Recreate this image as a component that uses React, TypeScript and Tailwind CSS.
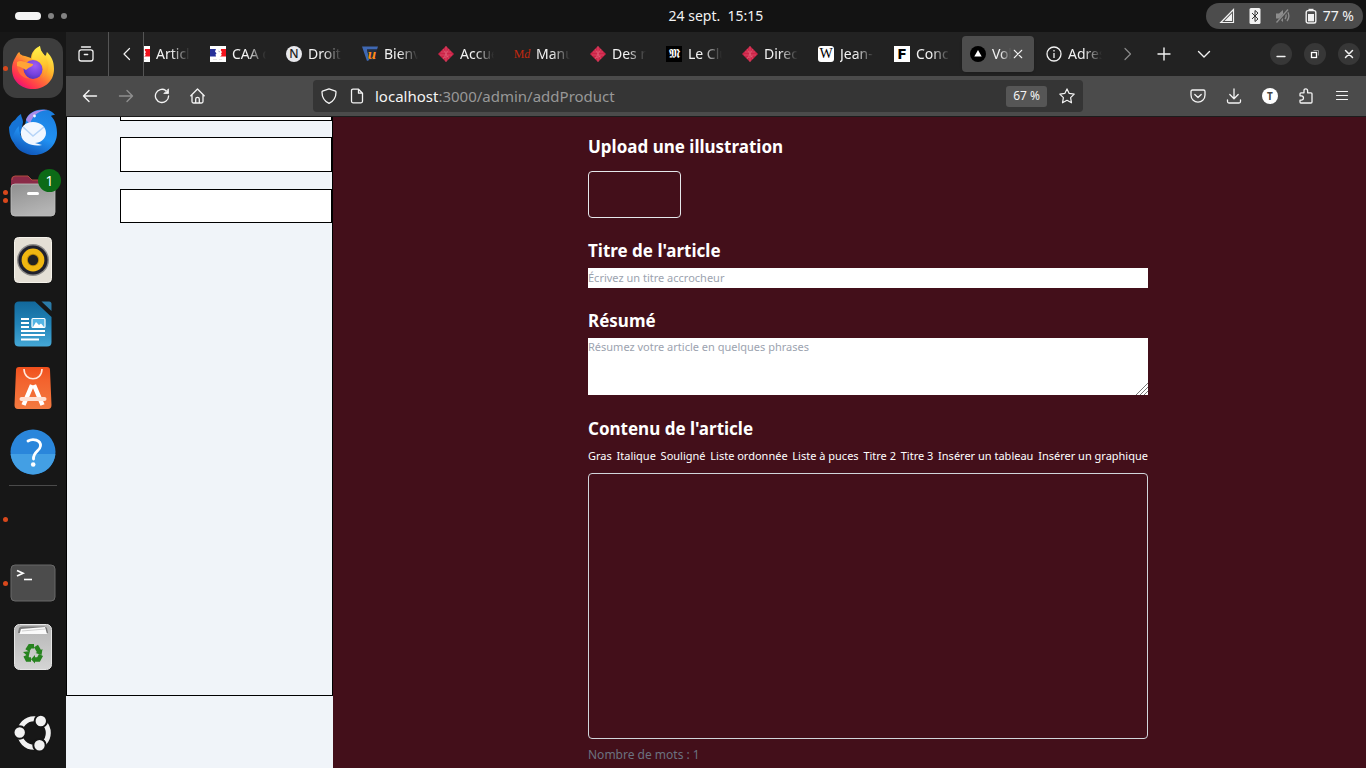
import type { ReactNode } from "react";

const UI_FONT = "font-['Noto_Sans','Open_Sans',sans-serif]";

function Line({ d, size = 16, width = 1.2, className = "" }: { d: string; size?: number; width?: number; className?: string }) {
  return (
    <svg
      width={size}
      height={size}
      viewBox="0 0 16 16"
      fill="none"
      stroke="currentColor"
      strokeWidth={width}
      strokeLinecap="round"
      strokeLinejoin="round"
      className={className}
      aria-hidden="true"
    >
      <path d={d} />
    </svg>
  );
}

/* ---------- Desktop top bar ---------- */

function TopBar() {
  return (
    <header className="grid h-8 shrink-0 grid-cols-3 items-center bg-[#131313] text-[#f2f2f2]">
      <div className="flex items-center gap-[7px] pl-[15px]">
        <span className="h-2 w-[26px] rounded-full bg-[#f4f4f4]" />
        <span className="size-[6px] rounded-full bg-[#828282]" />
        <span className="size-[6px] rounded-full bg-[#828282]" />
      </div>
      <button className="whitespace-pre pl-[66px] text-sm">24 sept.  15:15</button>
      <button className="mr-[3px] flex h-[26px] items-center justify-self-end rounded-full bg-[#4c4c4c] pr-[9px] pl-[13px] text-sm">
        <svg width="16" height="16" viewBox="0 0 16 16" aria-hidden="true">
          <path d="M1.8 14.5 L14.5 1.5 V14.5 Z" fill="none" stroke="#f2f2f2" strokeWidth="1.2" />
          <path d="M5.5 13 L13 5.2 V13 Z" fill="#f2f2f2" />
        </svg>
        <svg width="12" height="16" viewBox="0 0 12 16" className="ml-[14px]" aria-hidden="true">
          <rect x="0.5" y="0" width="11" height="16" rx="1.5" fill="#f2f2f2" />
          <path d="M3 5 L9 11 L6 13.5 V2.5 L9 5 L3 11" fill="none" stroke="#333" strokeWidth="1" />
        </svg>
        <svg width="16" height="16" viewBox="0 0 16 16" className="ml-[14px]" aria-hidden="true">
          <path d="M1 5.5 H4 L8 2 V14 L4 10.5 H1 Z" fill="#8d8d8d" />
          <path d="M10 5 Q12.2 8 10 11 M12 3 Q15.8 8 12 13" fill="none" stroke="#8d8d8d" strokeWidth="1.3" />
          <path d="M2 15 L14 1" stroke="#4c4c4c" strokeWidth="2.6" />
          <path d="M1.5 14.5 L13 1.5" stroke="#8d8d8d" strokeWidth="1.3" />
        </svg>
        <svg width="12" height="16" viewBox="0 0 12 16" className="ml-[14px]" aria-hidden="true">
          <path d="M3.5 2.5 V0.8 H8.5 V2.5" fill="#f2f2f2" />
          <rect x="1.2" y="2.6" width="9.6" height="12.4" rx="1.8" fill="none" stroke="#f2f2f2" strokeWidth="1.4" />
          <rect x="3" y="6" width="6" height="7.4" fill="#f2f2f2" />
        </svg>
        <span className="ml-[6px]">77 %</span>
      </button>
    </header>
  );
}

/* ---------- Dock ---------- */

function FirefoxIcon() {
  return (
    <svg width="48" height="48" viewBox="0 0 48 48" aria-hidden="true">
      <defs>
        <linearGradient id="ffBody" x1="0.85" y1="0.1" x2="0.2" y2="0.95">
          <stop offset="0" stopColor="#fff14a" />
          <stop offset="0.35" stopColor="#ffb52b" />
          <stop offset="0.6" stopColor="#ff6a3a" />
          <stop offset="0.85" stopColor="#ff3050" />
          <stop offset="1" stopColor="#e8117a" />
        </linearGradient>
        <radialGradient id="ffGlobe" cx="0.6" cy="0.3" r="0.8">
          <stop offset="0" stopColor="#a05cf5" />
          <stop offset="0.6" stopColor="#7341dc" />
          <stop offset="1" stopColor="#4a2fb0" />
        </radialGradient>
        <linearGradient id="ffTail" x1="0.5" y1="0" x2="0.6" y2="1">
          <stop offset="0" stopColor="#fff24a" />
          <stop offset="0.6" stopColor="#ffc52e" />
          <stop offset="1" stopColor="#ff8a30" />
        </linearGradient>
      </defs>
      <path d="M3 25 C3 18 6 14 9 9 C10 8 11 8 11 10 C13 11 14 12 16 12 L22 14 C22 9 26 4 31 2 C31 6 33 9 36 12 C38 11 37 9 38 8 C43 13 45 18 45 25 C45 37 36 45 24 45 C12 45 3 37 3 25 Z" fill="url(#ffBody)" />
      <path d="M31 2 C31 8 36 10 38 16 C41 22 39 30 33 34 C39 27 34 17 23 15 C23 9 26 5 31 2 Z" fill="url(#ffTail)" />
      <circle cx="24" cy="25.5" r="9.5" fill="url(#ffGlobe)" />
      <path d="M8 18 C11 15 14 16 16 18 C12 22 14 31 21 34.5 C13 35 7 28 8 18 Z" fill="#ff6a3c" />
      <path d="M8 18 C13 15 17 19 24 20 C25 22 20 23 17 26 C14 24 12 23 8 22 Z" fill="#ffa436" />
    </svg>
  );
}

function ThunderbirdIcon() {
  return (
    <svg width="50" height="50" viewBox="0 0 50 50" aria-hidden="true">
      <defs>
        <linearGradient id="tbBody" x1="0.7" y1="0" x2="0.3" y2="1">
          <stop offset="0" stopColor="#1b7fe0" />
          <stop offset="0.55" stopColor="#2191f2" />
          <stop offset="1" stopColor="#0f55b8" />
        </linearGradient>
      </defs>
      <path d="M1 20 C3 18 3 15 7 13 C9 10 11 8 13 7 C13 10 15 12 15 15 L13 26 L8 38 C3 34 1 27 1 20 Z" fill="#1674d6" />
      <path d="M18 13 C20 6 29 1 38 3 C42 3 45 5 47 8 C45 8 44 8 43 9 C48 14 49 21 49 26 C49 38 39 48 26 48 C15 48 5 40 5 31 C5 27 8 22 11 19 C10 25 13 29 15 31 Z" fill="url(#tbBody)" />
      <path d="M18 13 C20 6 29 2 40 3 C34 3 25 6 22 17 Z" fill="#a98be8" />
      <path d="M13 28 C12 20 17 15 25 15 C33 15 38 20 38 26 C38 32 32 36 27 36 L34 38 C25 40 14 36 13 28 Z" fill="#f1f7ff" />
      <path d="M15 20 L25 29 L36 20" fill="none" stroke="#b6d4f7" strokeWidth="1.6" />
      <circle cx="26.5" cy="9" r="1.4" fill="#e9f5ff" />
    </svg>
  );
}

function FilesIcon() {
  return (
    <svg width="46" height="44" viewBox="0 0 46 44" aria-hidden="true">
      <defs>
        <linearGradient id="flFront" x1="0" y1="0" x2="0.4" y2="1">
          <stop offset="0" stopColor="#8f8f8f" />
          <stop offset="1" stopColor="#b4b4b4" />
        </linearGradient>
      </defs>
      <path d="M1 14 V6 Q1 2 5 2 H18 L22 6 H41 Q45 6 45 10 V14 Z" fill="#8a2a47" />
      <path d="M2 6 Q2 2 5 2 H18 L22 6 H41" fill="none" stroke="#b04c3f" />
      <rect x="1" y="10" width="44" height="32" rx="4" fill="url(#flFront)" stroke="#c0c0c0" strokeWidth="0.8" />
      <rect x="17" y="18" width="12" height="3" rx="1.5" fill="#fff" />
    </svg>
  );
}

function SpeakerIcon() {
  return (
    <svg width="38" height="46" viewBox="0 0 38 46" aria-hidden="true">
      <rect x="0.5" y="0.5" width="37" height="45" rx="4" fill="#e4dfd5" stroke="#f5f2ea" />
      <circle cx="19" cy="23" r="16" fill="#8c8a88" />
      <circle cx="19" cy="23" r="14.6" fill="#20202c" />
      <circle cx="19" cy="23" r="11.4" fill="#f0b711" />
      <circle cx="19" cy="23" r="6.2" fill="#c58f05" />
      <circle cx="19" cy="23" r="5.2" fill="#222" />
    </svg>
  );
}

function WriterIcon() {
  return (
    <svg width="38" height="46" viewBox="0 0 38 46" aria-hidden="true">
      <defs>
        <linearGradient id="wrBg" x1="0" y1="0" x2="0" y2="1">
          <stop offset="0" stopColor="#12689b" />
          <stop offset="0.5" stopColor="#2284b8" />
          <stop offset="1" stopColor="#45a8d6" />
        </linearGradient>
      </defs>
      <path d="M5 0.5 H21 L37.5 16 V41 Q37.5 45.5 33 45.5 H5 Q0.5 45.5 0.5 41 V5 Q0.5 0.5 5 0.5 Z" fill="url(#wrBg)" />
      <path d="M27.5 0.5 H35 Q37.5 0.5 37.5 3 V10 Z" fill="#2b7ba8" />
      <path d="M7 18 H15 M7 22 H15 M7 26 H15 M7 30 H31 M7 34 H31 M7 38.5 H25" stroke="#fff" strokeWidth="2" />
      <rect x="18" y="17.5" width="13" height="9" rx="1" fill="#53b4e4" stroke="#fff" strokeWidth="1.2" />
      <path d="M19 26 L22 21 L25 24 L27 22.5 L30 26 Z" fill="#fff" />
    </svg>
  );
}

function StoreIcon() {
  return (
    <svg width="38" height="44" viewBox="0 0 38 44" aria-hidden="true">
      <defs>
        <linearGradient id="stBg" x1="0" y1="0" x2="0" y2="1">
          <stop offset="0" stopColor="#f04f1c" />
          <stop offset="0.3" stopColor="#f3622d" />
          <stop offset="1" stopColor="#f37a40" />
        </linearGradient>
      </defs>
      <path d="M5 1 H33 Q36 1 36 4 L37.5 39 Q37.5 43 34 43 H4 Q0.5 43 0.5 39 L2 4 Q2 1 5 1 Z" fill="url(#stBg)" />
      <path d="M10 3 C10 16 28 16 28 3" fill="none" stroke="#ffe9dd" strokeWidth="1.6" />
      <path d="M18 19 L9.5 39 M20 19 L28.5 39" stroke="#fff" strokeWidth="4.4" />
      <path d="M7.5 33 H30.5" stroke="#ffe1d3" strokeWidth="4" strokeLinecap="round" />
    </svg>
  );
}

function HelpIcon() {
  return (
    <svg width="46" height="46" viewBox="0 0 46 46" aria-hidden="true">
      <circle cx="23" cy="23" r="22.5" fill="#2a86db" />
      <path d="M0.6 25 A22.5 22.5 0 0 0 45.4 25 Z" fill="#439fe4" />
      <path d="M18 12 C23 9 31 11 30.5 17 C30 22 23 23 23.5 30" fill="none" stroke="#fff" strokeWidth="2.8" strokeLinecap="round" />
      <circle cx="23.2" cy="35.5" r="2.3" fill="#fff" />
    </svg>
  );
}

function TerminalIcon() {
  return (
    <svg width="46" height="38" viewBox="0 0 46 38" aria-hidden="true">
      <rect x="1" y="1" width="44" height="36" rx="4" fill="#4c4c4c" stroke="#686868" />
      <path d="M7 6.5 L13 9.3 L7 12" fill="none" stroke="#fff" strokeWidth="1.7" />
      <path d="M14 15.5 H22" stroke="#fff" strokeWidth="1.6" />
    </svg>
  );
}

function TrashIcon() {
  return (
    <svg width="38" height="46" viewBox="0 0 38 46" aria-hidden="true">
      <defs>
        <linearGradient id="trBg" x1="0" y1="0" x2="0" y2="1">
          <stop offset="0" stopColor="#b5b5b5" />
          <stop offset="1" stopColor="#d4d4d4" />
        </linearGradient>
      </defs>
      <rect x="0.5" y="0.5" width="37" height="45" rx="5" fill="url(#trBg)" stroke="#e5e5e5" />
      <path d="M4 9 L5 4 Q6 2.5 8 2.5 H30 Q32 2.5 33 4 L34 9 Z" fill="#777" />
      <path d="M5.5 10 L7 5 L31 3 L33 10 Z" fill="#fafafa" />
      <path d="M8 7 L31 5" stroke="#bbb" strokeWidth="0.7" />
      <g fill="none" stroke="#27831f" strokeWidth="4.6">
        <path d="M13.3 26.5 L16 22.3 H20" />
        <path d="M22 22 L25.5 28" />
        <path d="M27 31 L24.5 35.5 H20" />
        <path d="M17 35.5 H13.5 L11.5 31.5" />
      </g>
      <path d="M21.5 29 L28.5 25 L27.5 31 Z M21 31 V39.5 L17 35.3 Z M9 28 L16 27 L14.5 33 Z" fill="#27831f" />
    </svg>
  );
}

function UbuntuIcon() {
  return (
    <svg width="40" height="40" viewBox="0 0 40 40" aria-hidden="true">
      <circle cx="21" cy="20" r="14.3" fill="none" stroke="#f2f2f2" strokeWidth="5" />
      <g fill="#f2f2f2" stroke="#161616" strokeWidth="2">
        <circle cx="6.7" cy="19.5" r="6.2" />
        <circle cx="27.8" cy="8" r="6.2" />
        <circle cx="26.5" cy="32.2" r="6.2" />
      </g>
    </svg>
  );
}

function DockItem({ label, dots = 0, children }: { label: string; dots?: number; children?: ReactNode }) {
  return (
    <button aria-label={label} className="relative flex h-16 w-full shrink-0 items-center justify-center">
      {dots > 0 && (
        <span className="absolute left-[3px] flex flex-col gap-[3px]">
          {Array.from({ length: dots }, (_, i) => (
            <span key={i} className="size-[5px] rounded-full bg-[#d9481c]" />
          ))}
        </span>
      )}
      {children}
    </button>
  );
}

function Dock() {
  return (
    <nav aria-label="Dock" className="flex w-[66px] shrink-0 flex-col bg-[#171717] pt-1 pb-[3px]">
      <DockItem label="Firefox" dots={1}>
        <span className="flex size-[60px] items-center justify-center rounded-[14px] bg-[#3d3d3d]">
          <FirefoxIcon />
        </span>
      </DockItem>
      <DockItem label="Thunderbird"><ThunderbirdIcon /></DockItem>
      <DockItem label="Fichiers" dots={2}>
        <FilesIcon />
        <span className="absolute top-[5px] right-[5px] flex size-[23px] items-center justify-center rounded-full bg-[#0c6b17] text-sm text-white">
          1
        </span>
      </DockItem>
      <DockItem label="Rhythmbox"><SpeakerIcon /></DockItem>
      <DockItem label="LibreOffice Writer"><WriterIcon /></DockItem>
      <DockItem label="Logiciels"><StoreIcon /></DockItem>
      <DockItem label="Aide"><HelpIcon /></DockItem>
      <div className="mx-[9px] my-px h-px shrink-0 bg-[#4a4a4a]" />
      <DockItem label="Application" dots={1} />
      <DockItem label="Terminal" dots={1}><TerminalIcon /></DockItem>
      <DockItem label="Corbeille"><TrashIcon /></DockItem>
      <div className="mt-auto">
        <DockItem label="Applications"><UbuntuIcon /></DockItem>
      </div>
    </nav>
  );
}

/* ---------- Browser ---------- */

function FlagIcon() {
  return (
    <svg width="16" height="16" viewBox="0 0 16 16" aria-hidden="true">
      <rect width="16" height="16" fill="#fff" />
      <path d="M0 3 H6 L5 5.5 L6.5 7.5 L5.5 8.5 L6 10.5 H0 Z" fill="#26309a" />
      <path d="M11 3 H16 V10.5 H10 C12 9.5 12 8.5 11 7.5 L12 6 L10.8 4.5 Z" fill="#f2121c" />
      <path d="M8.5 4.5 L9.8 5.5 L9 6.5 Z" fill="#77779a" />
      <path d="M3 13.5 H7 M9 13.5 H12" stroke="#d0d0d0" strokeWidth="0.6" />
    </svg>
  );
}

function NIcon() {
  return (
    <span className="flex size-4 items-center justify-center rounded-full bg-[#e9e9ed] text-xs leading-none font-medium text-[#222]">N</span>
  );
}

function UIcon() {
  return (
    <span className="relative flex size-4 items-center justify-end pr-[2px]">
      <svg width="16" height="16" viewBox="0 0 16 16" className="absolute inset-0" aria-hidden="true">
        <path d="M0 0.5 H16 L15 3.5 H5 L7.5 14 L5 15 Z" fill="#3f68b3" />
        <path d="M5 3.5 H15 L12.5 14 H7.5 Z" fill="#222c40" />
      </svg>
      <span className="relative font-['Liberation_Serif',serif] text-[15px] leading-none font-bold text-[#ff8a14] italic">u</span>
    </span>
  );
}

function DiamondIcon() {
  return (
    <svg width="16" height="16" viewBox="0 0 16 16" aria-hidden="true">
      <path d="M8 0 L16 8 L8 16 L0 8 Z" fill="#cc2347" />
      <path d="M5 3 L8 8 L5 13 M8 0 V16 M11 3 L8 8 L11 13 M3 6 H13 M2 9 L14 9 M5 12 L11 10" fill="none" stroke="#e8768c" strokeWidth="0.4" />
    </svg>
  );
}

function MdIcon() {
  return (
    <span className="flex size-4 items-center justify-center font-['Liberation_Serif',serif] text-xs leading-none text-[#c0280f]">
      M<i>d</i>
    </span>
  );
}

function MondeIcon() {
  return (
    <span className="flex size-4 items-center justify-center bg-black font-['DejaVu_Sans',sans-serif] text-xs leading-none text-white">𝕸</span>
  );
}

function WikiIcon() {
  return (
    <span className="flex size-4 items-center justify-center rounded-[3px] bg-white font-['Liberation_Serif',serif] text-sm leading-none text-black">W</span>
  );
}

function FIcon() {
  return (
    <span className="flex size-4 items-center justify-center bg-white font-['DejaVu_Sans',sans-serif] text-sm leading-none font-bold text-black">F</span>
  );
}

function TriangleIcon() {
  return (
    <svg width="16" height="16" viewBox="0 0 16 16" aria-hidden="true">
      <circle cx="8" cy="8" r="8" fill="#000" />
      <path d="M8 4 L11.7 10.5 H4.3 Z" fill="#fff" />
    </svg>
  );
}

function InfoIcon() {
  return (
    <svg width="16" height="16" viewBox="0 0 16 16" fill="none" stroke="#f2f2f2" strokeWidth="1.3" aria-hidden="true">
      <circle cx="8" cy="8" r="7" />
      <path d="M8 7 V12 M8 4 V5.5" />
    </svg>
  );
}

const TABS: { title: string; icon: ReactNode; active?: boolean }[] = [
  { title: "Article", icon: <FlagIcon /> },
  { title: "CAA de", icon: <FlagIcon /> },
  { title: "Droit", icon: <NIcon /> },
  { title: "Bienv", icon: <UIcon /> },
  { title: "Accue", icon: <DiamondIcon /> },
  { title: "Manue", icon: <MdIcon /> },
  { title: "Des n", icon: <DiamondIcon /> },
  { title: "Le Clu", icon: <MondeIcon /> },
  { title: "Direct", icon: <DiamondIcon /> },
  { title: "Jean-", icon: <WikiIcon /> },
  { title: "Conce", icon: <FIcon /> },
  { title: "Vol", icon: <TriangleIcon />, active: true },
  { title: "Adres", icon: <InfoIcon /> },
];

function Tab({ title, icon, active }: { title: string; icon: ReactNode; active?: boolean }) {
  return (
    <div className="w-[76px] shrink-0 px-0.5 py-1">
      <div className={`flex h-9 items-center rounded pl-2 ${active ? "bg-[#4d4d4d] pr-[11px] shadow" : "pr-2"}`}>
        <span className="shrink-0">{icon}</span>
        <button
          role="tab"
          aria-selected={!!active}
          className="ml-[6px] min-w-0 flex-1 overflow-hidden [mask-image:linear-gradient(to_right,black_45%,transparent)] text-left text-sm whitespace-nowrap"
        >
          {title}
        </button>
        {active && (
          <button aria-label="Fermer l'onglet" className="ml-[2px] shrink-0">
            <Line d="M2 2 L14 14 M14 2 L2 14" size={10} width={1.7} />
          </button>
        )}
      </div>
    </div>
  );
}

function TabBar() {
  return (
    <div className="flex h-11 shrink-0 items-center bg-[#222222] text-[#f2f2f2]">
      <button aria-label="Vue des onglets" className="flex h-full w-[43px] items-center justify-center border-r border-[#555] pr-[2px]">
        <Line size={16} width={1.3} d="M3.5 1 H12.5 M1 6 Q1 3.8 3.2 3.8 H12.8 Q15 3.8 15 6 V12.8 Q15 15 12.8 15 H3.2 Q1 15 1 12.8 Z M6.3 8.5 H9.7" />
      </button>
      <button aria-label="Onglets précédents" className="flex h-full w-[35px] items-center justify-center border-r border-[#555] pl-[2px]">
        <Line d="M10.5 2.5 L5 8 L10.5 13.5" />
      </button>
      <div role="tablist" className="flex min-w-0 flex-1 justify-end overflow-hidden">
        {TABS.map((tab) => (
          <Tab key={tab.title} {...tab} />
        ))}
      </div>
      <button aria-label="Onglets suivants" className="flex w-8 items-center justify-center text-[#8a8a8a]">
        <Line d="M5 2.5 L10.5 8 L5 13.5" />
      </button>
      <button aria-label="Nouvel onglet" className="flex w-10 items-center justify-center">
        <Line d="M8 2 V14 M2 8 H14" width={1.4} />
      </button>
      <button aria-label="Lister les onglets" className="flex w-10 items-center justify-center">
        <Line d="M2.5 5.5 L8 11 L13.5 5.5" width={1.4} />
      </button>
      <div className="ml-[46px] flex gap-3 pr-[6px]">
        <button aria-label="Réduire" className="flex size-[22px] items-center justify-center rounded-full bg-[#373737]">
          <Line d="M4 10.5 H12" width={1.3} />
        </button>
        <button aria-label="Restaurer" className="flex size-[22px] items-center justify-center rounded-full bg-[#373737]">
          <svg width="16" height="16" viewBox="0 0 16 16" fill="none" aria-hidden="true">
            <rect x="4.5" y="6.5" width="5" height="5" stroke="#fff" strokeWidth="1.3" />
            <path d="M6.5 4.5 H11.5 V9.5" stroke="#8a8a8a" />
          </svg>
        </button>
        <button aria-label="Fermer" className="flex size-[22px] items-center justify-center rounded-full bg-[#373737]">
          <Line d="M4.5 4.5 L11.5 11.5 M11.5 4.5 L4.5 11.5" width={1.5} />
        </button>
      </div>
    </div>
  );
}

function ToolButton({ label, dim, children }: { label: string; dim?: boolean; children: ReactNode }) {
  return (
    <button aria-label={label} className={`flex h-9 w-9 items-center justify-center ${dim ? "text-[#8f8f8f]" : ""}`}>
      {children}
    </button>
  );
}

function NavBar() {
  return (
    <div className="flex h-[41px] shrink-0 items-center border-b border-[#1c1c1c] bg-[#4b4b4b] px-[6px] text-[#f4f4f4]">
      <ToolButton label="Précédent"><Line d="M14.5 8 H1.5 M7 2.5 L1.5 8 L7 13.5" width={1.4} /></ToolButton>
      <ToolButton label="Suivant" dim><Line d="M1.5 8 H14.5 M9 2.5 L14.5 8 L9 13.5" width={1.4} /></ToolButton>
      <ToolButton label="Actualiser">
        <svg width="16" height="16" viewBox="0 0 16 16" fill="none" stroke="currentColor" strokeWidth="1.3" strokeLinecap="round" aria-hidden="true">
          <path d="M11.8 2.5 A6.6 6.6 0 1 0 14.6 8" />
          <path d="M14.5 1.2 V5.5 H10.2 Z" fill="currentColor" strokeWidth="0.8" strokeLinejoin="round" />
        </svg>
      </ToolButton>
      <ToolButton label="Accueil">
        <Line d="M0.8 7.8 L7.5 1 L14.2 7.8 M2 6.8 V13.5 Q2 15 3.5 15 H11.5 Q13 15 13 13.5 V6.8 M5.7 15 V11 Q5.7 9.3 7.5 9.3 Q9.3 9.3 9.3 11 V15" width={1.3} />
      </ToolButton>

      <div className="mx-[97px] flex h-8 min-w-0 flex-1 items-center rounded bg-[#353535] px-2">
        <button aria-label="Protection contre le pistage">
          <Line d="M8 0.8 L14.5 3.2 Q15 3.4 15 4.2 C15 9.5 12.5 13.2 8 15.3 C3.5 13.2 1 9.5 1 4.2 Q1 3.4 1.5 3.2 Z" width={1.3} />
        </button>
        <button aria-label="Informations sur le site" className="ml-3">
          <Line d="M9.5 1.2 H4 Q2.5 1.2 2.5 2.7 V13.3 Q2.5 14.8 4 14.8 H12 Q13.5 14.8 13.5 13.3 V5.2 Z M9.5 1.2 V5.2 H13.5" width={1.3} />
        </button>
        <div role="textbox" aria-label="Adresse" className="ml-[10px] min-w-0 flex-1 truncate text-[15px] leading-5 text-[#989898]">
          <span className="text-[#f4f4f4]">localhost</span>:3000/admin/addProduct
        </div>
        <button className="flex h-[21px] items-center rounded-[3px] bg-[#565656] px-[7px] text-xs">67 %</button>
        <button aria-label="Marquer cette page" className="ml-3">
          <Line d="M8 0.9 L10.2 5.4 L15.2 6.1 L11.6 9.6 L12.5 14.8 L8 12.3 L3.5 14.8 L4.4 9.6 L0.8 6.1 L5.8 5.4 Z" width={1.2} />
        </button>
      </div>

      <ToolButton label="Pocket">
        <Line d="M2.5 2 H13.5 Q15 2 15 3.5 V7 C15 16.5 1 16.5 1 7 V3.5 Q1 2 2.5 2 Z M4.8 6.5 L8 9.5 L11.2 6.5" width={1.3} />
      </ToolButton>
      <ToolButton label="Téléchargements">
        <Line d="M8 1 V10.5 M3.8 6.5 L8 10.7 L12.2 6.5 M1.5 12 V13.5 Q1.5 15 3 15 H13 Q14.5 15 14.5 13.5 V12" width={1.3} />
      </ToolButton>
      <ToolButton label="Compte">
        <span className="flex size-4 items-center justify-center rounded-full bg-white text-[10px] leading-none font-bold text-[#444]">T</span>
      </ToolButton>
      <ToolButton label="Extensions">
        <Line d="M2 6.5 V5.8 Q2 4.8 3 4.8 H6 V2.8 Q6 0.8 7.8 0.8 Q9.6 0.8 9.6 2.8 V4.8 H13 Q14 4.8 14 5.8 V14 Q14 15 13 15 H3 Q2 15 2 14 V12.2 H3.5 Q5.5 12 5.5 10 Q5.5 8 3.5 7.8 H2 V6.5" width={1.3} />
      </ToolButton>
      <ToolButton label="Menu">
        <Line d="M2.5 3.5 H13.5 M2.5 7.5 H13.5 M2.5 11.5 H13.5" width={1.2} />
      </ToolButton>
    </div>
  );
}

/* ---------- Page ---------- */

function SidePanel() {
  return (
    <aside className="w-[267px] shrink-0 bg-[#f0f4f9]">
      <ul className="h-[579px] border-r border-b border-l border-black pl-[53px]">
        <li className="h-1 border border-t-0 border-black bg-white" />
        <li className="mt-4 h-[35px] border border-black bg-white" />
        <li className="mt-[17px] h-[34px] border border-black bg-white" />
      </ul>
    </aside>
  );
}

const FORMATS = [
  "Gras",
  "Italique",
  "Souligné",
  "Liste ordonnée",
  "Liste à puces",
  "Titre 2",
  "Titre 3",
  "Insérer un tableau",
  "Insérer un graphique",
];

const HEADING = "text-[17px] leading-[26px] font-bold";

function ArticleForm() {
  return (
    <form className="flex min-w-0 flex-1 flex-col pt-[17px] text-white">
      <label htmlFor="illustration" className={HEADING}>Upload une illustration</label>
      <label className="mt-[11px] h-[47px] w-[93px] rounded border border-[#e5e7eb]">
        <input id="illustration" type="file" className="sr-only" />
      </label>

      <label htmlFor="titre" className={`mt-5 ${HEADING}`}>Titre de l'article</label>
      <input
        id="titre"
        type="text"
        placeholder="Écrivez un titre accrocheur"
        className="mt-1 h-5 bg-white pb-px text-[11px] text-black placeholder:text-[#9ca3af]"
      />

      <label htmlFor="resume" className={`mt-5 ${HEADING}`}>Résumé</label>
      <textarea
        id="resume"
        placeholder="Résumez votre article en quelques phrases"
        className="mt-1 h-[57px] resize bg-white text-[11px] leading-[18px] text-black placeholder:text-[#9ca3af] [&::-webkit-resizer]:bg-[linear-gradient(135deg,#fff_58%,transparent_58%),repeating-linear-gradient(135deg,#777_0_1px,#fff_1px_3px)]"
      />

      <label htmlFor="contenu" className={`mt-[21px] ${HEADING}`}>Contenu de l'article</label>
      <div className="mt-[6px] flex justify-between text-[11px] leading-4 whitespace-nowrap">
        {FORMATS.map((format) => (
          <button key={format} type="button">{format}</button>
        ))}
      </div>
      <textarea
        id="contenu"
        className="mt-[9px] h-[266px] resize-none rounded border border-[#d1d5db] p-2 text-[11px]"
      />
      <p className="mt-2 text-xs text-[#6b7280]">Nombre de mots : 1</p>
    </form>
  );
}

export default function App() {
  return (
    <div className={`flex h-screen flex-col overflow-hidden bg-[#171717] ${UI_FONT}`}>
      <TopBar />
      <div className="flex min-h-0 flex-1">
        <Dock />
        <div className="flex min-w-0 flex-1 flex-col">
          <TabBar />
          <NavBar />
          <div className="flex min-h-0 flex-1 overflow-hidden">
            <SidePanel />
            <main className="flex min-w-0 flex-1 bg-[#430f1a] pr-[218px] pl-[255px]">
              <ArticleForm />
            </main>
          </div>
        </div>
      </div>
    </div>
  );
}
